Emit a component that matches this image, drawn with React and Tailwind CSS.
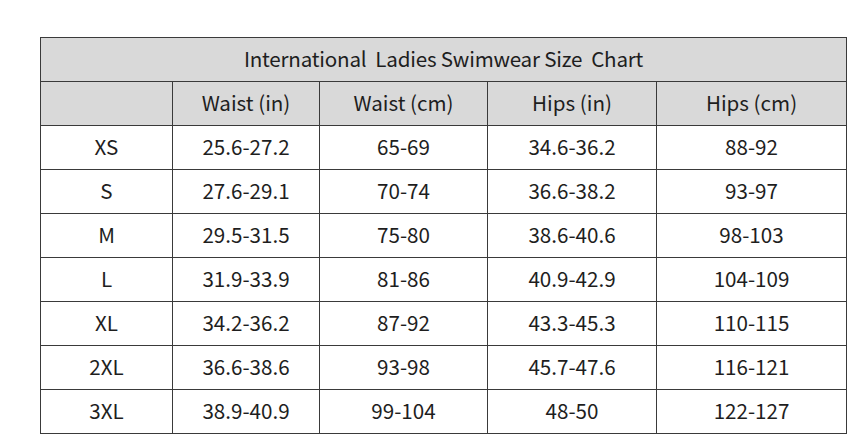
const rows = [
  ["XS", "25.6-27.2", "65-69", "34.6-36.2", "88-92"],
  ["S", "27.6-29.1", "70-74", "36.6-38.2", "93-97"],
  ["M", "29.5-31.5", "75-80", "38.6-40.6", "98-103"],
  ["L", "31.9-33.9", "81-86", "40.9-42.9", "104-109"],
  ["XL", "34.2-36.2", "87-92", "43.3-45.3", "110-115"],
  ["2XL", "36.6-38.6", "93-98", "45.7-47.6", "116-121"],
  ["3XL", "38.9-40.9", "99-104", "48-50", "122-127"],
];

const headers = ["", "Waist (in)", "Waist (cm)", "Hips (in)", "Hips (cm)"];

export default function App() {
  return (
    <div
      className="w-[864px] h-[446px] bg-white pt-[37px] pl-[40px]"
      style={{ fontFamily: '"Noto Sans CJK SC", "Noto Sans", sans-serif' }}
    >
      <table className="table-fixed border-collapse w-[806px] text-[20.6px] text-[#1e1e1e]">
        <colgroup>
          <col className="w-[132px]" />
          <col className="w-[147px]" />
          <col className="w-[168px]" />
          <col className="w-[169px]" />
          <col className="w-[190px]" />
        </colgroup>
        <thead>
          <tr className="h-[44px] bg-[#d9d9d9]">
            <th colSpan={5} className="border border-[#3a3a3a] font-normal text-center p-0 pb-[3px] leading-none tracking-[-0.2px]">
              International&nbsp; Ladies Swimwear Size&nbsp; Chart
            </th>
          </tr>
          <tr className="h-[44px] bg-[#d9d9d9]">
            {headers.map((h, i) => (
              <th key={i} className="border border-[#3a3a3a] font-normal text-center p-0 pb-[2px] leading-none">
                {h}
              </th>
            ))}
          </tr>
        </thead>
        <tbody>
          {rows.map((r) => (
            <tr key={r[0]} className="h-[44px]">
              {r.map((c, i) => (
                <td key={i} className="border border-[#3a3a3a] text-center p-0 pb-[2px] leading-none">
                  {c}
                </td>
              ))}
            </tr>
          ))}
        </tbody>
      </table>
    </div>
  );
}
